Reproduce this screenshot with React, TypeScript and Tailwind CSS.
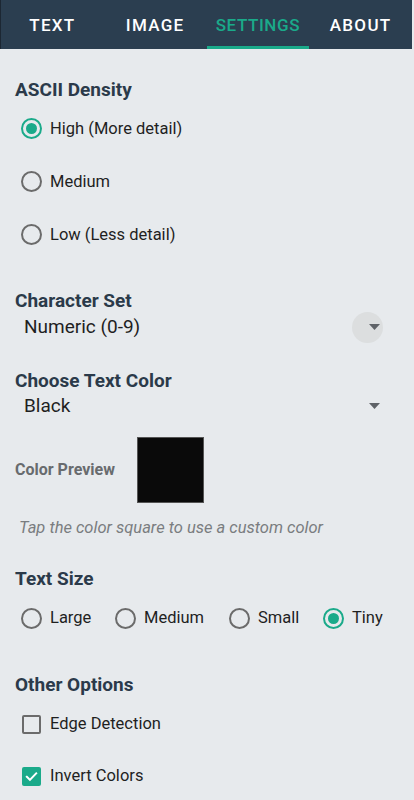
function Radio({ checked }: { checked: boolean }) {
  return (
    <span
      className={`w-[21px] h-[21px] rounded-full border-2 flex items-center justify-center shrink-0 ${
        checked ? "border-[#1aaa8a]" : "border-[#6b6b6b]"
      }`}
    >
      {checked && <span className="w-[11px] h-[11px] rounded-full bg-[#1aaa8a]" />}
    </span>
  );
}

function Check({ checked }: { checked: boolean }) {
  return checked ? (
    <span className="w-[19px] h-[19px] rounded-[2px] bg-[#1aaa8a] flex items-center justify-center shrink-0">
      <svg width="15" height="15" viewBox="0 0 24 24" fill="none" stroke="white" strokeWidth="3.2" strokeLinecap="square">
        <path d="M4.5 12.5l5 5L19.5 7" />
      </svg>
    </span>
  ) : (
    <span className="w-[19px] h-[19px] rounded-[2px] border-2 border-[#6b6b6b] shrink-0" />
  );
}

function Caret() {
  return (
    <svg width="11" height="6" viewBox="0 0 11 6" className="block">
      <path d="M0 0h11L5.5 6z" fill="#5f6368" />
    </svg>
  );
}

function Heading({ children, className = "" }: { children: React.ReactNode; className?: string }) {
  return <h2 className={`text-[19px] font-bold text-[#2b3a4a] leading-[24px] ${className}`}>{children}</h2>;
}

export default function App() {
  const tab = 2;
  const tabs = ["TEXT", "IMAGE", "SETTINGS", "ABOUT"];
  const density = ["High (More detail)", "Medium", "Low (Less detail)"];
  const sizes = ["Large", "Medium", "Small", "Tiny"];

  return (
    <div className="w-[414px] h-[800px] bg-[#e7eaed] overflow-hidden" style={{ fontFamily: "Roboto, 'Noto Sans', sans-serif" }}>
      <header className="h-[49px] bg-[#2b3e50] grid grid-cols-4 border-l border-[#1c2733] mr-[2px]">
        {tabs.map((t, i) => (
          <div key={t} className="relative flex items-center justify-center pt-[2px]">
            <span
              className={`text-[17px] font-medium ${
                i === tab ? "text-[#1aaa8a] text-[16px] tracking-[0.6px]" : "text-white tracking-[1.3px]"
              }`}
            >
              {t}
            </span>
            {i === tab && <span className="absolute bottom-0 left-0 right-0 h-[3px] bg-[#1aaa8a]" />}
          </div>
        ))}
      </header>

      <main className="px-[15px] text-[#1f1f1f]">
        <Heading className="mt-[29px]">ASCII Density</Heading>
        <div className="flex flex-col">
          {density.map((d, i) => (
            <div key={d} className="h-[53px] flex items-center gap-[8px] pl-[6px]">
              <Radio checked={i === 0} />
              <span className="text-[16.5px] leading-[24px]">{d}</span>
            </div>
          ))}
        </div>

        <Heading className="mt-[28px]">Character Set</Heading>
        <div className="h-[28px] flex items-center justify-between pl-[9px] pr-[19px]">
          <span className="text-[19px]">Numeric (0-9)</span>
          <span className="relative flex items-center justify-center">
            <span className="absolute w-[31px] h-[31px] rounded-full bg-[#dcdedf] left-[-17px]" />
            <span className="relative">
              <Caret />
            </span>
          </span>
        </div>

        <Heading className="mt-[28px]">Choose Text Color</Heading>
        <div className="h-[26px] flex items-center justify-between pl-[9px] pr-[19px]">
          <span className="text-[19px]">Black</span>
          <Caret />
        </div>

        <div className="mt-[18px] flex items-center">
          <span className="w-[122px] text-[16px] font-bold text-[#686b6e]">Color Preview</span>
          <span className="w-[67px] h-[66px] bg-[#0a0a0a] border border-[#555]" />
        </div>
        <p className="mt-[13px] pl-[4px] text-[16.5px] leading-[24px] italic text-[#7a7d80]">
          Tap the color square to use a custom color
        </p>

        <Heading className="mt-[27px]">Text Size</Heading>
        <div className="mt-[15px] h-[24px] flex items-center pl-[6px]">
          {sizes.map((s, i) => (
            <div
              key={s}
              className={`flex items-center gap-[8px] ${
                i === 0 ? "w-[94px]" : i === 1 ? "w-[114px]" : i === 2 ? "w-[94px]" : ""
              }`}
            >
              <Radio checked={i === 3} />
              <span className="text-[16.5px] leading-[24px]">{s}</span>
            </div>
          ))}
        </div>

        <Heading className="mt-[43px]">Other Options</Heading>
        <div className="flex flex-col mt-[1px]">
          <div className="h-[52px] flex items-center gap-[9px] pl-[7px]">
            <Check checked={false} />
            <span className="text-[16.5px] leading-[24px]">Edge Detection</span>
          </div>
          <div className="h-[52px] flex items-center gap-[9px] pl-[7px]">
            <Check checked={true} />
            <span className="text-[16.5px] leading-[24px]">Invert Colors</span>
          </div>
        </div>
      </main>
    </div>
  );
}
